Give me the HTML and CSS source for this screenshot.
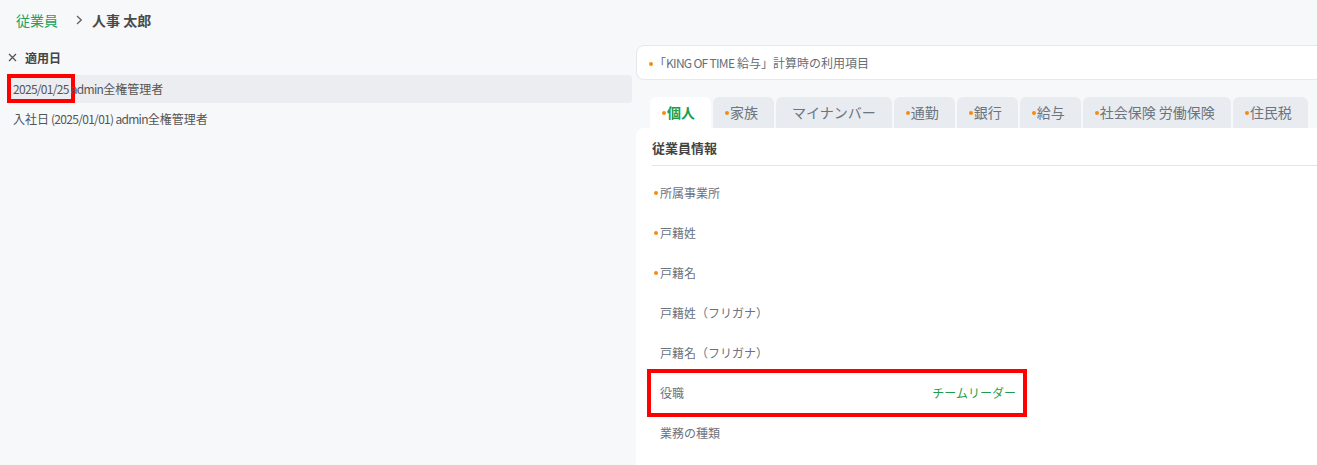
FILE: index.html
```html
<!DOCTYPE html>
<html lang="ja">
<head>
    <meta charset="UTF-8">
    <meta name="viewport" content="width=device-width, initial-scale=1.0">
    <title>人事 太郎 - 従業員</title>
    <link rel="stylesheet" href="styles.css">
</head>
<body>
    <header class="crumbs">
        <a class="crumb-link" href="#">従業員</a>
        <svg class="crumb-sep" width="10" height="10" viewBox="0 0 10 10"><path d="M3 1 L7.2 5 L3 9" fill="none" stroke="#666" stroke-width="1.4"/></svg>
        <span class="crumb-current">人事 太郎</span>
    </header>

    <div class="layout">
        <aside class="history">
            <div class="history-head">
                <svg width="9" height="9" viewBox="0 0 9 9"><path d="M1 1 L8 8 M8 1 L1 8" stroke="#555" stroke-width="1.3"/></svg>
                <span>適用日</span>
            </div>
            <ul class="history-list">
                <li class="history-item is-selected"><span class="marked latin">2025/01/25</span><span class="latin"> admin</span>全権管理者</li>
                <li class="history-item">入社日<span class="latin"> (2025/01/01) admin</span>全権管理者</li>
            </ul>
        </aside>

        <main class="detail">
            <div class="notice"><span class="dot"></span>「<span class="latin">KING OF TIME</span> 給与」計算時の利用項目</div>

            <nav class="tabs">
                <a class="tab is-active" href="#"><span class="dot"></span>個人</a>
                <a class="tab" href="#"><span class="dot"></span>家族</a>
                <a class="tab" href="#">マイナンバー</a>
                <a class="tab" href="#"><span class="dot"></span>通勤</a>
                <a class="tab" href="#"><span class="dot"></span>銀行</a>
                <a class="tab" href="#"><span class="dot"></span>給与</a>
                <a class="tab" href="#"><span class="dot"></span>社会保険 労働保険</a>
                <a class="tab" href="#"><span class="dot"></span>住民税</a>
            </nav>

            <section class="panel">
                <h2 class="panel-title">従業員情報</h2>
                <div class="fields">
                    <div class="field"><span class="label"><span class="dot"></span>所属事業所</span></div>
                    <div class="field"><span class="label"><span class="dot"></span>戸籍姓</span></div>
                    <div class="field"><span class="label"><span class="dot"></span>戸籍名</span></div>
                    <div class="field"><span class="label">戸籍姓（フリガナ）</span></div>
                    <div class="field"><span class="label">戸籍名（フリガナ）</span></div>
                    <div class="field marked-row"><span class="label">役職</span><span class="value">チームリーダー</span></div>
                    <div class="field"><span class="label">業務の種類</span></div>
                </div>
            </section>
        </main>
    </div>
</body>
</html>
```

FILE: styles.css
```css
body { margin: 0; background: #f7f8fa; font-family: "Noto Sans CJK JP", "Noto Sans", sans-serif; color: #555; overflow: hidden; height: 465px; }

/* latin runs are set a little tighter than the CJK glyphs */
.latin { letter-spacing: -0.7px; }

.crumbs { height: 40px; display: flex; align-items: center; padding-left: 16px; font-size: 14px; }
.crumb-link { color: #23a15a; text-decoration: none; }
.crumb-sep { margin: 0 8px 0 16px; }
.crumb-current { font-weight: bold; color: #4a4a4a; }

.layout { display: grid; grid-template-columns: 632px 690px; column-gap: 4px; padding-top: 5px; }

/* history list on the left */
.history-head { display: flex; align-items: center; gap: 8px; height: 24px; padding-left: 8px; font-size: 12px; font-weight: bold; color: #444; }
.history-list { list-style: none; margin: 6px 0 0; padding: 0 0 0 7px; }
.history-item { height: 26px; padding-bottom: 2px; display: flex; align-items: center; padding-left: 6px; font-size: 12px; color: #555; border-radius: 4px; margin-bottom: 2px; white-space: pre; }
.history-item.is-selected { background: #ecedf0; }
.marked { outline: 4px solid #f00; outline-offset: 2px; }

/* detail on the right */
.dot { display: inline-block; flex: none; width: 4px; height: 4px; border-radius: 50%; background: #f28c18; margin-right: 1px; position: relative; top: 1px; }

.notice { height: 33px; display: flex; align-items: center; padding-left: 12px; background: #fff; border: 1px solid #e6e8ec; border-radius: 8px; font-size: 12px; color: #666e78; white-space: pre; }

.tabs { display: flex; gap: 2px; margin: 17px 0 0 14px; }
.tab { height: 29px; padding: 0 16px 2px; display: flex; align-items: center; background: #e8ebef; border-radius: 6px 6px 0 0; font-size: 14px; color: #6b7480; text-decoration: none; }
.tab .dot { margin-left: -4px; }
.tab.is-active { background: #fff; color: #1e9e4a; font-weight: bold; }

.panel { background: #fff; border-radius: 8px 0 0 0; padding: 10px 0 0 16px; height: 400px; }
.panel-title { margin: 0; font-size: 13px; font-weight: bold; color: #444; padding-bottom: 8px; border-bottom: 1px solid #e3e5e9; }

.fields { width: 372px; margin: 7px 0 0 -1px; }
.field { height: 40px; display: flex; align-items: center; justify-content: space-between; padding: 0 7px 2px 9px; box-sizing: border-box; font-size: 12px; color: #6b7280; }
.field .label { display: inline-flex; align-items: center; }
.field .label .dot { margin-left: -6px; margin-right: 2px; }
.field .value { color: #1e9e4a; }
.marked-row { outline: 4px solid #f00; }
```
